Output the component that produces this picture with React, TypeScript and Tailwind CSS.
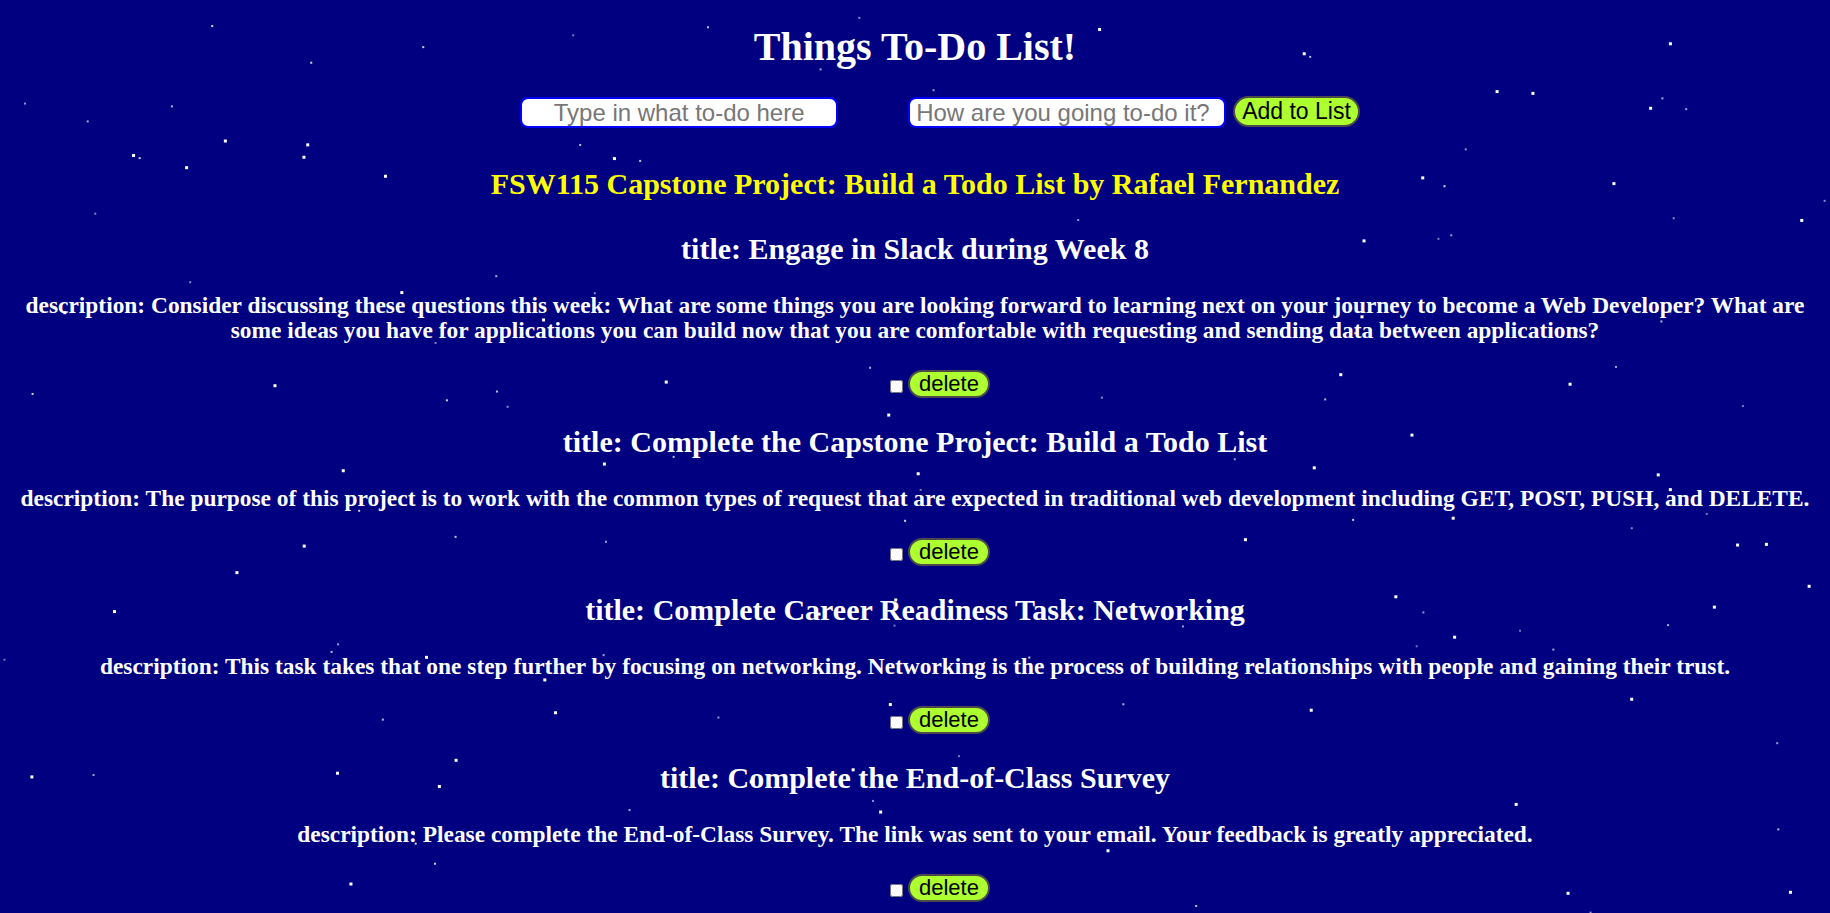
import { useState } from "react";

type Todo = { id: number; title: string; description: string };

const initialTodos: Todo[] = [
  {
    id: 1,
    title: "Engage in Slack during Week 8",
    description:
      "Consider discussing these questions this week: What are some things you are looking forward to learning next on your journey to become a Web Developer? What are some ideas you have for applications you can build now that you are comfortable with requesting and sending data between applications?",
  },
  {
    id: 2,
    title: "Complete the Capstone Project: Build a Todo List",
    description:
      "The purpose of this project is to work with the common types of request that are expected in traditional web development including GET, POST, PUSH, and DELETE.",
  },
  {
    id: 3,
    title: "Complete Career Readiness Task: Networking",
    description:
      "This task takes that one step further by focusing on networking. Networking is the process of building relationships with people and gaining their trust.",
  },
  {
    id: 4,
    title: "Complete the End-of-Class Survey",
    description:
      "Please complete the End-of-Class Survey. The link was sent to your email. Your feedback is greatly appreciated.",
  },
];

// simple seeded random so the star field is the same every render
function makeStars(count: number) {
  let seed = 20240611;
  const rand = () => {
    seed = (seed * 1103515245 + 12345) % 2147483648;
    return seed / 2147483648;
  };
  const stars = [];
  for (let i = 0; i < count; i++) {
    const big = rand() < 0.4;
    stars.push({
      x: rand() * 1830,
      y: rand() * 1000,
      s: big ? 3 : 2,
      o: big ? 1 : 0.45 + rand() * 0.4,
    });
  }
  return stars;
}

const stars = makeStars(160);

function StarField() {
  return (
    <svg
      className="absolute inset-0 w-full h-full pointer-events-none"
      xmlns="http://www.w3.org/2000/svg"
    >
      {stars.map((st, i) => (
        <rect key={i} x={st.x} y={st.y} width={st.s} height={st.s} fill="#ffffff" opacity={st.o} />
      ))}
    </svg>
  );
}

export default function App() {
  const [todos, setTodos] = useState<Todo[]>(initialTodos);
  const [title, setTitle] = useState<string>("");
  const [description, setDescription] = useState<string>("");

  const handleAdd = (e: React.FormEvent) => {
    e.preventDefault();
    if (!title) return;
    setTodos([...todos, { id: Date.now(), title, description }]);
    setTitle("");
    setDescription("");
  };

  return (
    <div className="relative min-h-screen overflow-hidden bg-[#000080] text-white font-['Liberation_Serif',serif] font-bold text-center">
      <StarField />
      <div className="relative flex flex-col items-center">
        <h1 className="mt-[24px] text-[40px] leading-[46px]">Things To-Do List!</h1>

        <form
          onSubmit={handleAdd}
          className="mt-[27px] ml-[50px] flex items-center font-['Liberation_Sans',Arial,sans-serif] font-normal"
        >
          <input
            className="w-[318px] h-[31px] bg-white rounded-[8px] border-2 border-[#0000ff] text-center text-[24px] text-black placeholder:text-[#777777] outline-none"
            placeholder="Type in what to-do here"
            value={title}
            onChange={(e) => setTitle(e.target.value)}
          />
          <input
            className="ml-[70px] w-[318px] h-[31px] bg-white rounded-[8px] border-2 border-[#0000ff] px-[6px] text-[24px] text-black placeholder:text-[#777777] outline-none"
            placeholder="How are you going to-do it?"
            value={description}
            onChange={(e) => setDescription(e.target.value)}
          />
          <button
            type="submit"
            className="ml-[7px] -mt-[2px] h-[31px] px-[7px] rounded-full bg-[#adff2f] border-2 border-[#4a4a4a] text-black text-[23px] leading-none cursor-pointer"
          >
            Add to List
          </button>
        </form>

        <h2 className="mt-[41px] text-[30px] leading-[30px] text-[#ffff00]">
          FSW115 Capstone Project: Build a Todo List by Rafael Fernandez
        </h2>

        <div className="mt-[35px] flex flex-col gap-[29px] w-full">
          {todos.map((todo) => (
            <div key={todo.id} className="flex flex-col items-center">
              <h3 className="text-[30px] leading-[30px]">title: {todo.title}</h3>
              <p className="mt-[29px] px-[15px] text-[23.4px] leading-[25px]">description: {todo.description}</p>
              <div className="mt-[27px] ml-[50px] flex items-center gap-[5px] font-['Liberation_Sans',Arial,sans-serif] font-normal">
                <input type="checkbox" className="w-[13px] h-[13px] mt-[4px]" />
                <button
                  onClick={() => setTodos(todos.filter((t) => t.id !== todo.id))}
                  className="h-[28px] px-[9px] rounded-full bg-[#adff2f] border-2 border-[#4a4a4a] text-black text-[22px] leading-none cursor-pointer"
                >
                  delete
                </button>
              </div>
            </div>
          ))}
        </div>
      </div>
    </div>
  );
}
